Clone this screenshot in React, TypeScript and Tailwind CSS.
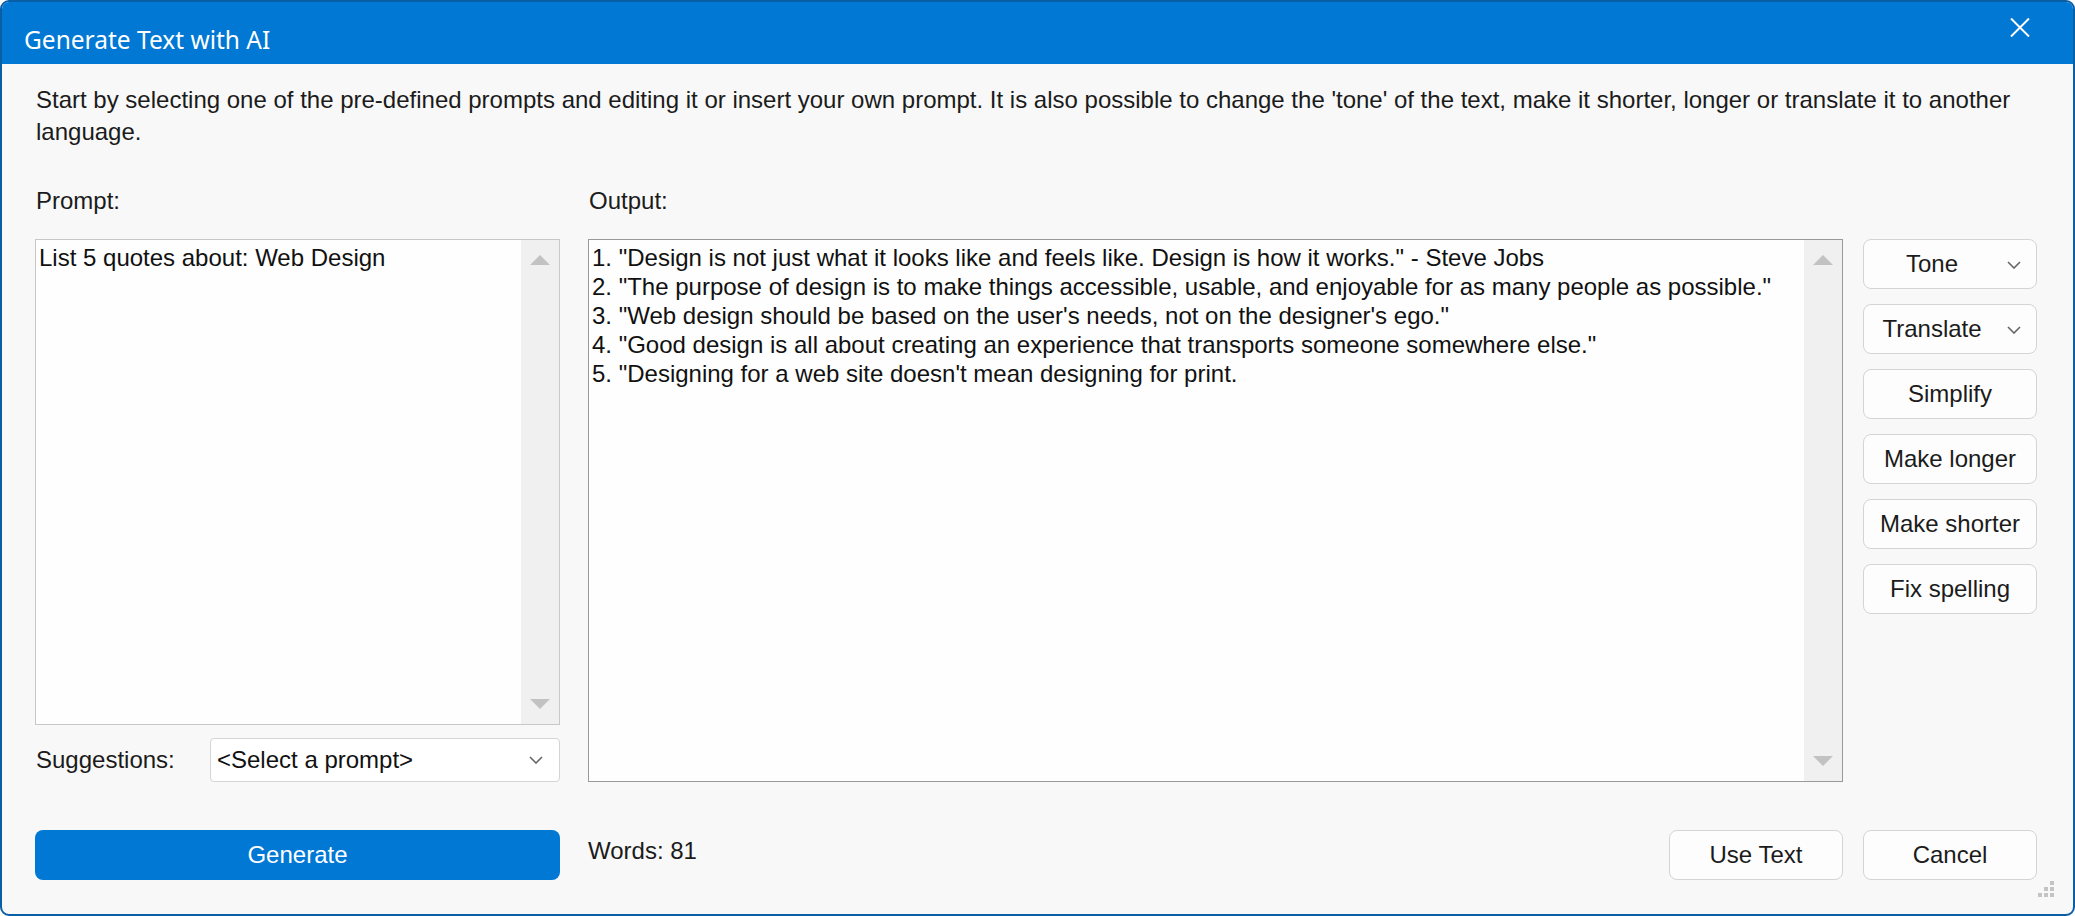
import React from 'react';

const quotes = [
  '1. "Design is not just what it looks like and feels like. Design is how it works." - Steve Jobs',
  '2. "The purpose of design is to make things accessible, usable, and enjoyable for as many people as possible."',
  '3. "Web design should be based on the user\'s needs, not on the designer\'s ego."',
  '4. "Good design is all about creating an experience that transports someone somewhere else."',
  '5. "Designing for a web site doesn\'t mean designing for print.',
];

const sideActions = ['Simplify', 'Make longer', 'Make shorter', 'Fix spelling'];

function Chevron() {
  return (
    <svg width="14" height="8" viewBox="0 0 14 8" fill="none">
      <polyline points="1,1 7,7 13,1" stroke="#666" strokeWidth="1.6" />
    </svg>
  );
}

function Scrollbar() {
  return (
    <div className="flex w-[38px] shrink-0 flex-col justify-between bg-[#f0f0f0] py-[15px]">
      <svg className="mx-auto" width="20" height="10" viewBox="0 0 20 10">
        <polygon points="10,0 20,10 0,10" fill="#c2c2c2" />
      </svg>
      <svg className="mx-auto" width="20" height="10" viewBox="0 0 20 10">
        <polygon points="0,0 20,0 10,10" fill="#c2c2c2" />
      </svg>
    </div>
  );
}

function SideButton({ label, menu }: { label: string; menu?: boolean }) {
  return (
    <button className="relative flex h-[50px] w-full items-center justify-center rounded-[8px] border border-[#d4d4d4] bg-[#fdfdfd] text-[24px] text-[#1b1b1b]">
      <span className={menu ? '-ml-[36px]' : ''}>{label}</span>
      {menu && (
        <span className="absolute right-[15px] top-[21px]">
          <Chevron />
        </span>
      )}
    </button>
  );
}

export default function App() {
  return (
    <div className="h-[916px] w-[2075px] bg-white" style={{ fontFamily: '"Liberation Sans", Arial, sans-serif' }}>
      <div className="flex h-full flex-col overflow-hidden rounded-[9px] border-2 border-[#0a5ea6] bg-[#f8f8f8]">
        <div className="flex h-[62px] shrink-0 items-start justify-between bg-[#0078d4] pl-[22px] pr-[43px]">
          <h1 className="pt-[22px] text-[24.5px] leading-[32px] text-white" style={{ fontFamily: '"Noto Sans", sans-serif' }}>
            Generate Text with AI
          </h1>
          <svg className="mt-[16px]" width="20" height="19" viewBox="0 0 20 19">
            <path d="M1 0.5 L19 18.5 M19 0.5 L1 18.5" stroke="white" strokeWidth="2" />
          </svg>
        </div>

        <div className="flex flex-1 flex-col pl-[33px] pr-[36px]">
          <p className="mt-[20px] whitespace-nowrap pl-[1px] text-[24px] leading-[32px] text-[#1b1b1b]">
            Start by selecting one of the pre-defined prompts and editing it or insert your own prompt. It is also possible to change the 'tone' of the text, make it shorter, longer or translate it to another
            <br />
            language.
          </p>

          <div className="mt-[37px] grid grid-cols-[525px_1255px_174px] gap-x-[20px]">
            <div className="pl-[1px] text-[24px] leading-[32px] text-[#1b1b1b]">Prompt:</div>
            <div className="ml-[8px] pl-[1px] text-[24px] leading-[32px] text-[#1b1b1b]">Output:</div>
            <div />
          </div>

          <div className="mt-[22px] flex h-[543px] gap-x-[20px]">
            <div className="flex w-[525px] flex-col">
              <div className="flex h-[486px] border border-[#c8c8c8] bg-[#fefefe]">
                <div className="flex-1 px-[3px] pt-[3px] text-[24px] leading-[29px] text-[#111]">List 5 quotes about: Web Design</div>
                <Scrollbar />
              </div>
              <div className="mt-[13px] flex h-[44px] items-center">
                <span className="w-[175px] pl-[1px] text-[24px] text-[#1b1b1b]">Suggestions:</span>
                <div className="flex h-full flex-1 items-center justify-between rounded-[4px] border border-[#d4d4d4] bg-white pl-[6px] pr-[16px] text-[24px] text-[#111]">
                  <span>&lt;Select a prompt&gt;</span>
                  <Chevron />
                </div>
              </div>
            </div>

            <div className="ml-[8px] flex w-[1255px] border border-[#9a9a9a] bg-[#fefefe]">
              <div className="flex-1 px-[3px] pt-[3px] text-[24px] leading-[29px] text-[#111]">
                {quotes.map((q) => (
                  <div key={q} className="whitespace-nowrap">{q}</div>
                ))}
              </div>
              <Scrollbar />
            </div>

            <div className="flex w-[174px] flex-col gap-y-[15px]">
              <SideButton label="Tone" menu />
              <SideButton label="Translate" menu />
              {sideActions.map((a) => (
                <SideButton key={a} label={a} />
              ))}
            </div>
          </div>

          <div className="mt-[48px] flex items-start">
            <button className="h-[50px] w-[525px] rounded-[8px] bg-[#0078d4] text-[24px] text-white">Generate</button>
            <span className="ml-[28px] mt-[5px] text-[24px] leading-[32px] text-[#1b1b1b]">Words: 81</span>
            <div className="ml-auto flex gap-x-[20px]">
              <button className="h-[50px] w-[174px] rounded-[8px] border border-[#d4d4d4] bg-[#fdfdfd] text-[24px] text-[#1b1b1b]">Use Text</button>
              <button className="h-[50px] w-[174px] rounded-[8px] border border-[#d4d4d4] bg-[#fdfdfd] text-[24px] text-[#1b1b1b]">Cancel</button>
            </div>
          </div>

          <div className="mt-auto mb-[17px] ml-auto mr-[-17px] grid grid-cols-3 gap-[2px]">
            <span />
            <span />
            <span className="h-[4px] w-[4px] bg-[#c4c4c4]" />
            <span />
            <span className="h-[4px] w-[4px] bg-[#c4c4c4]" />
            <span className="h-[4px] w-[4px] bg-[#c4c4c4]" />
            <span className="h-[4px] w-[4px] bg-[#c4c4c4]" />
            <span className="h-[4px] w-[4px] bg-[#c4c4c4]" />
            <span className="h-[4px] w-[4px] bg-[#c4c4c4]" />
          </div>
        </div>
      </div>
    </div>
  );
}
